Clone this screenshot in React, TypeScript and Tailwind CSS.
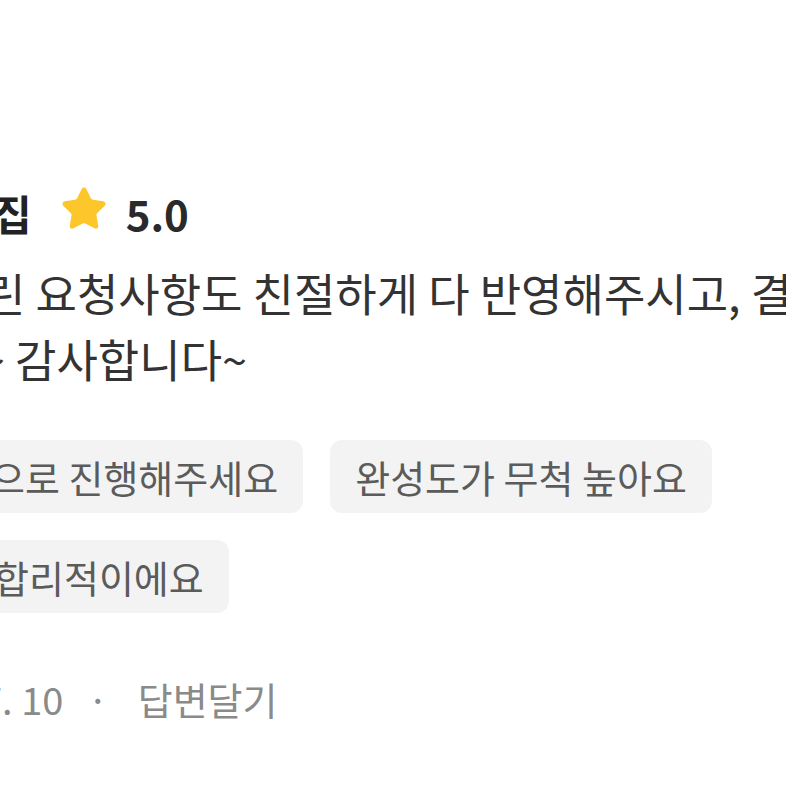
import { Star } from 'lucide-react'

const FONT = '"Noto Sans CJK KR", "Noto Sans", sans-serif'

interface TagProps {
  label: string
  cutClass?: string
}

function Tag({ label, cutClass = 'pl-[25px]' }: TagProps) {
  return (
    <div
      className={
        'flex h-[73px] items-center rounded-[12px] bg-[#f3f3f3] pr-[25px] text-[38px] text-[#5b5b5b] whitespace-nowrap ' +
        cutClass
      }
    >
      {label}
    </div>
  )
}

export default function App() {
  return (
    <div
      className="h-[786px] w-[786px] overflow-hidden bg-white"
      style={{ fontFamily: FONT }}
    >
      <div className="flex flex-col pt-[187px]">
        {/* 작성자 + 별점 */}
        <div className="flex h-[50px] items-center">
          <span className="-ml-[7px] text-[42px] font-bold text-[#222]">집</span>
          <Star
            className="ml-[28px] h-[48px] w-[48px] -translate-y-[3px] text-[#fdc62b]"
            fill="currentColor"
            strokeWidth={1.5}
          />
          <span className="ml-[18px] text-[42px] font-bold text-[#2a2a2a]">5.0</span>
        </div>

        {/* 리뷰 본문 */}
        <div className="mt-[23px] text-[45px] leading-[66px] text-[#333] whitespace-nowrap">
          <p className="-ml-[16px]">린 요청사항도 친절하게 다 반영해주시고, 결과물도</p>
          <p className="-ml-[20px]">~ 감사합니다~</p>
        </div>

        {/* 태그 */}
        <div className="mt-[48px] flex flex-col gap-[27px]">
          <div className="flex gap-[27px]">
            <Tag label="으로 진행해주세요" cutClass="-ml-[36px] pl-[26px]" />
            <Tag label="완성도가 무척 높아요" />
          </div>
          <div className="flex">
            <Tag label="합리적이에요" cutClass="-ml-[32px] pl-[26px]" />
          </div>
        </div>

        {/* 날짜 · 답변달기 */}
        <div className="mt-[60px] flex h-[50px] items-center text-[38px] text-[#8a8a8a] whitespace-nowrap">
          <span className="-ml-[19px]">7. 10</span>
          <span className="ml-[24px]">·</span>
          <span className="ml-[29px]">답변달기</span>
        </div>
      </div>
    </div>
  )
}
